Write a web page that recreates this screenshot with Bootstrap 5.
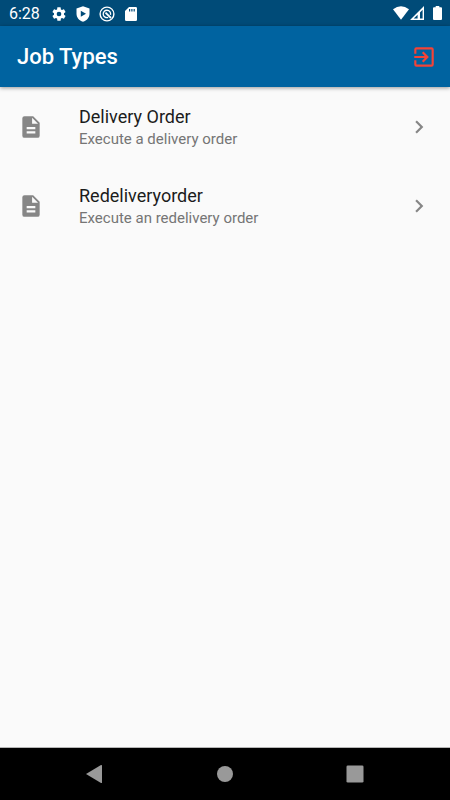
<!DOCTYPE html>
<html lang="en">
<head>
<meta charset="utf-8">
<meta name="viewport" content="width=device-width, initial-scale=1">
<title>Job Types</title>
<link href="https://cdn.jsdelivr.net/npm/bootstrap@5.3.0/dist/css/bootstrap.min.css" rel="stylesheet">
<style>
  body { font-family: Roboto, "Liberation Sans", sans-serif; background: #fafafa; }
  svg { display: block; fill: currentColor; flex: none; }
  .status-bar { height: 26px; background: #004b78; padding: 1px 8px 0 9px; font-size: 16px; line-height: 26px; }
  .status-icons { gap: 8px; margin-left: 11px; }
  .signal-icons { gap: 1px; padding-bottom: 1px; }
  .app-bar { height: 61px; background: #0063a0; padding: 0 13px 0 17px; box-shadow: 0 1px 4px rgba(0,0,0,.4); }
  .app-title { font-size: 22px; line-height: 28px; font-weight: 500; }
  .exit-btn { color: #f44336; }
  .job-item { height: 79px; padding: 0 18px; gap: 35px; background: transparent; color: #868686; }
  .job-copy { padding-top: 2px; }
  .job-title { font-size: 18px; line-height: 24px; color: #1c1c1c; }
  .job-text { font-size: 15px; line-height: 21px; color: #757575; }
  .system-nav { height: 53px; background: #000; border-top: 1px solid #b5b5b5; padding: 0 81px 0 80px; }
  .system-nav .btn { color: #999; }
</style>
<script src="https://cdn.jsdelivr.net/npm/bootstrap@5.3.0/dist/js/bootstrap.bundle.min.js"></script>
</head>
<body class="d-flex flex-column min-vh-100">
  <div class="status-bar d-flex align-items-center text-white">
    <span>6:28</span>
    <div class="status-icons d-flex align-items-center">
      <svg width="16" height="16" viewBox="0 0 24 24"><path d="M19.430 12.980c.04-.32.07-.64.07-.98s-.03-.66-.07-.98l2.110-1.650c.19-.15.24-.42.12-.64l-2-3.460c-.12-.22-.39-.3-.61-.22l-2.490 1c-.52-.4-1.080-.73-1.690-.98l-.38-2.650A.49.49 0 0 0 14 2h-4c-.25 0-.46.18-.49.42l-.38 2.650c-.61.25-1.170.59-1.690.98l-2.490-1c-.23-.09-.49 0-.61.22l-2 3.460c-.13.22-.07.49.12.64l2.110 1.650c-.04.32-.07.65-.07.98s.03.66.07.98l-2.110 1.650c-.19.15-.24.42-.12.64l2 3.460c.12.22.39.3.61.22l2.490-1c.52.4 1.080.73 1.690.98l.38 2.650c.03.24.24.42.49.42h4c.25 0 .46-.18.49-.42l.38-2.650c.61-.25 1.170-.59 1.690-.98l2.490 1c.23.09.49 0 .61-.22l2-3.460c.12-.22.07-.49-.12-.64zM12 15.500a3.500 3.500 0 1 1 0-7 3.500 3.500 0 0 1 0 7z"/></svg>
      <svg width="16" height="16" viewBox="0 0 16 16"><path fill-rule="evenodd" d="M8 .3 14.500 2.600V7.800C14.500 11.500 11.900 14.700 8 15.700 4.100 14.700 1.500 11.500 1.500 7.800V2.600ZM5.800 4.800V10.800L11 7.800Z"/></svg>
      <svg width="16" height="16" viewBox="0 0 16 16" stroke="currentColor"><circle cx="8" cy="8" r="6.900" fill="none" stroke-width="1.400"/><path d="M9.200 11.400A3.700 3.700 0 1 1 11.500 8.800" fill="none" stroke-width="1.300"/><path d="M6.500 6.700 12 12" fill="none" stroke-width="1.800"/></svg>
      <svg width="16" height="16" viewBox="0 0 16 16"><path fill-rule="evenodd" d="M6 1h6.700a1.300 1.300 0 0 1 1.300 1.300v11.400a1.300 1.300 0 0 1-1.300 1.300H3.300A1.300 1.300 0 0 1 2 13.700V5zM6 3v2.500h1.200V3zm2.300 0v2.500h1.200V3zm2.300 0v2.500h1.200V3z"/></svg>
    </div>
    <div class="signal-icons d-flex align-items-center ms-auto">
      <svg width="16" height="14" viewBox="0 0 16 14"><path d="M0 3.200Q8-2.600 16 3.200L8 13.700Z"/></svg>
      <svg width="14" height="14" viewBox="0 0 14 14"><path fill-rule="evenodd" d="M14 0V14H0ZM12.600 3.800 10 6.400V12.600H12.600ZM7.600 8.700 3.700 12.600H7.600Z"/></svg>
      <svg class="ms-2" width="9" height="14" viewBox="0 0 9 14"><path d="M2.700 0h3.600v1.300H8a1 1 0 0 1 1 1V13a1 1 0 0 1-1 1H1a1 1 0 0 1-1-1V2.300a1 1 0 0 1 1-1h1.700z"/></svg>
    </div>
  </div>

  <header class="app-bar d-flex align-items-center justify-content-between text-white">
    <h1 class="app-title m-0">Job Types</h1>
    <button type="button" class="exit-btn btn border-0 p-0" aria-label="Log out">
      <svg width="26" height="26" viewBox="0 0 24 24"><path d="M10.090 15.590 11.500 17l5-5-5-5-1.410 1.410L12.670 11H3v2h9.670l-2.580 2.590zM19 3H5a2 2 0 0 0-2 2v4h2V5h14v14H5v-4H3v4a2 2 0 0 0 2 2h14a2 2 0 0 0 2-2V5a2 2 0 0 0-2-2z"/></svg>
    </button>
  </header>

  <main class="list-group list-group-flush flex-grow-1">
    <a href="#delivery" class="job-item list-group-item list-group-item-action border-0 d-flex align-items-center">
      <svg width="26" height="26" viewBox="0 0 24 24"><path d="M14 2H6a2 2 0 0 0-2 2v16a2 2 0 0 0 2 2h12a2 2 0 0 0 2-2V8l-6-6zm2 16H8v-2h8v2zm0-4H8v-2h8v2zm-3-5V3.500L18.500 9H13z"/></svg>
      <div class="job-copy flex-grow-1"><div class="job-title">Delivery Order</div><div class="job-text">Execute a delivery order</div></div>
      <svg width="26" height="26" viewBox="0 0 24 24"><path d="M10 6 8.590 7.410 13.170 12l-4.580 4.590L10 18l6-6z"/></svg>
    </a>
    <a href="#redelivery" class="job-item list-group-item list-group-item-action border-0 d-flex align-items-center">
      <svg width="26" height="26" viewBox="0 0 24 24"><path d="M14 2H6a2 2 0 0 0-2 2v16a2 2 0 0 0 2 2h12a2 2 0 0 0 2-2V8l-6-6zm2 16H8v-2h8v2zm0-4H8v-2h8v2zm-3-5V3.500L18.500 9H13z"/></svg>
      <div class="job-copy flex-grow-1"><div class="job-title">Redeliveryorder</div><div class="job-text">Execute an redelivery order</div></div>
      <svg width="26" height="26" viewBox="0 0 24 24"><path d="M10 6 8.590 7.410 13.170 12l-4.580 4.590L10 18l6-6z"/></svg>
    </a>
  </main>

  <nav class="system-nav d-flex align-items-center justify-content-between" aria-label="System">
    <button type="button" class="btn border-0 p-0" aria-label="Back"><svg width="28" height="20" viewBox="0 0 28 20"><path d="M6 10 21 1q1-.4 1 .6v16.800q0 1-1 .6z"/></svg></button>
    <button type="button" class="btn border-0 p-0" aria-label="Home"><svg width="28" height="20" viewBox="0 0 28 20"><circle cx="14" cy="10" r="8"/></svg></button>
    <button type="button" class="btn border-0 p-0" aria-label="Recent apps"><svg width="28" height="20" viewBox="0 0 28 20"><rect x="5.500" y="1.500" width="17" height="17" rx="1.300"/></svg></button>
  </nav>
</body>
</html>
